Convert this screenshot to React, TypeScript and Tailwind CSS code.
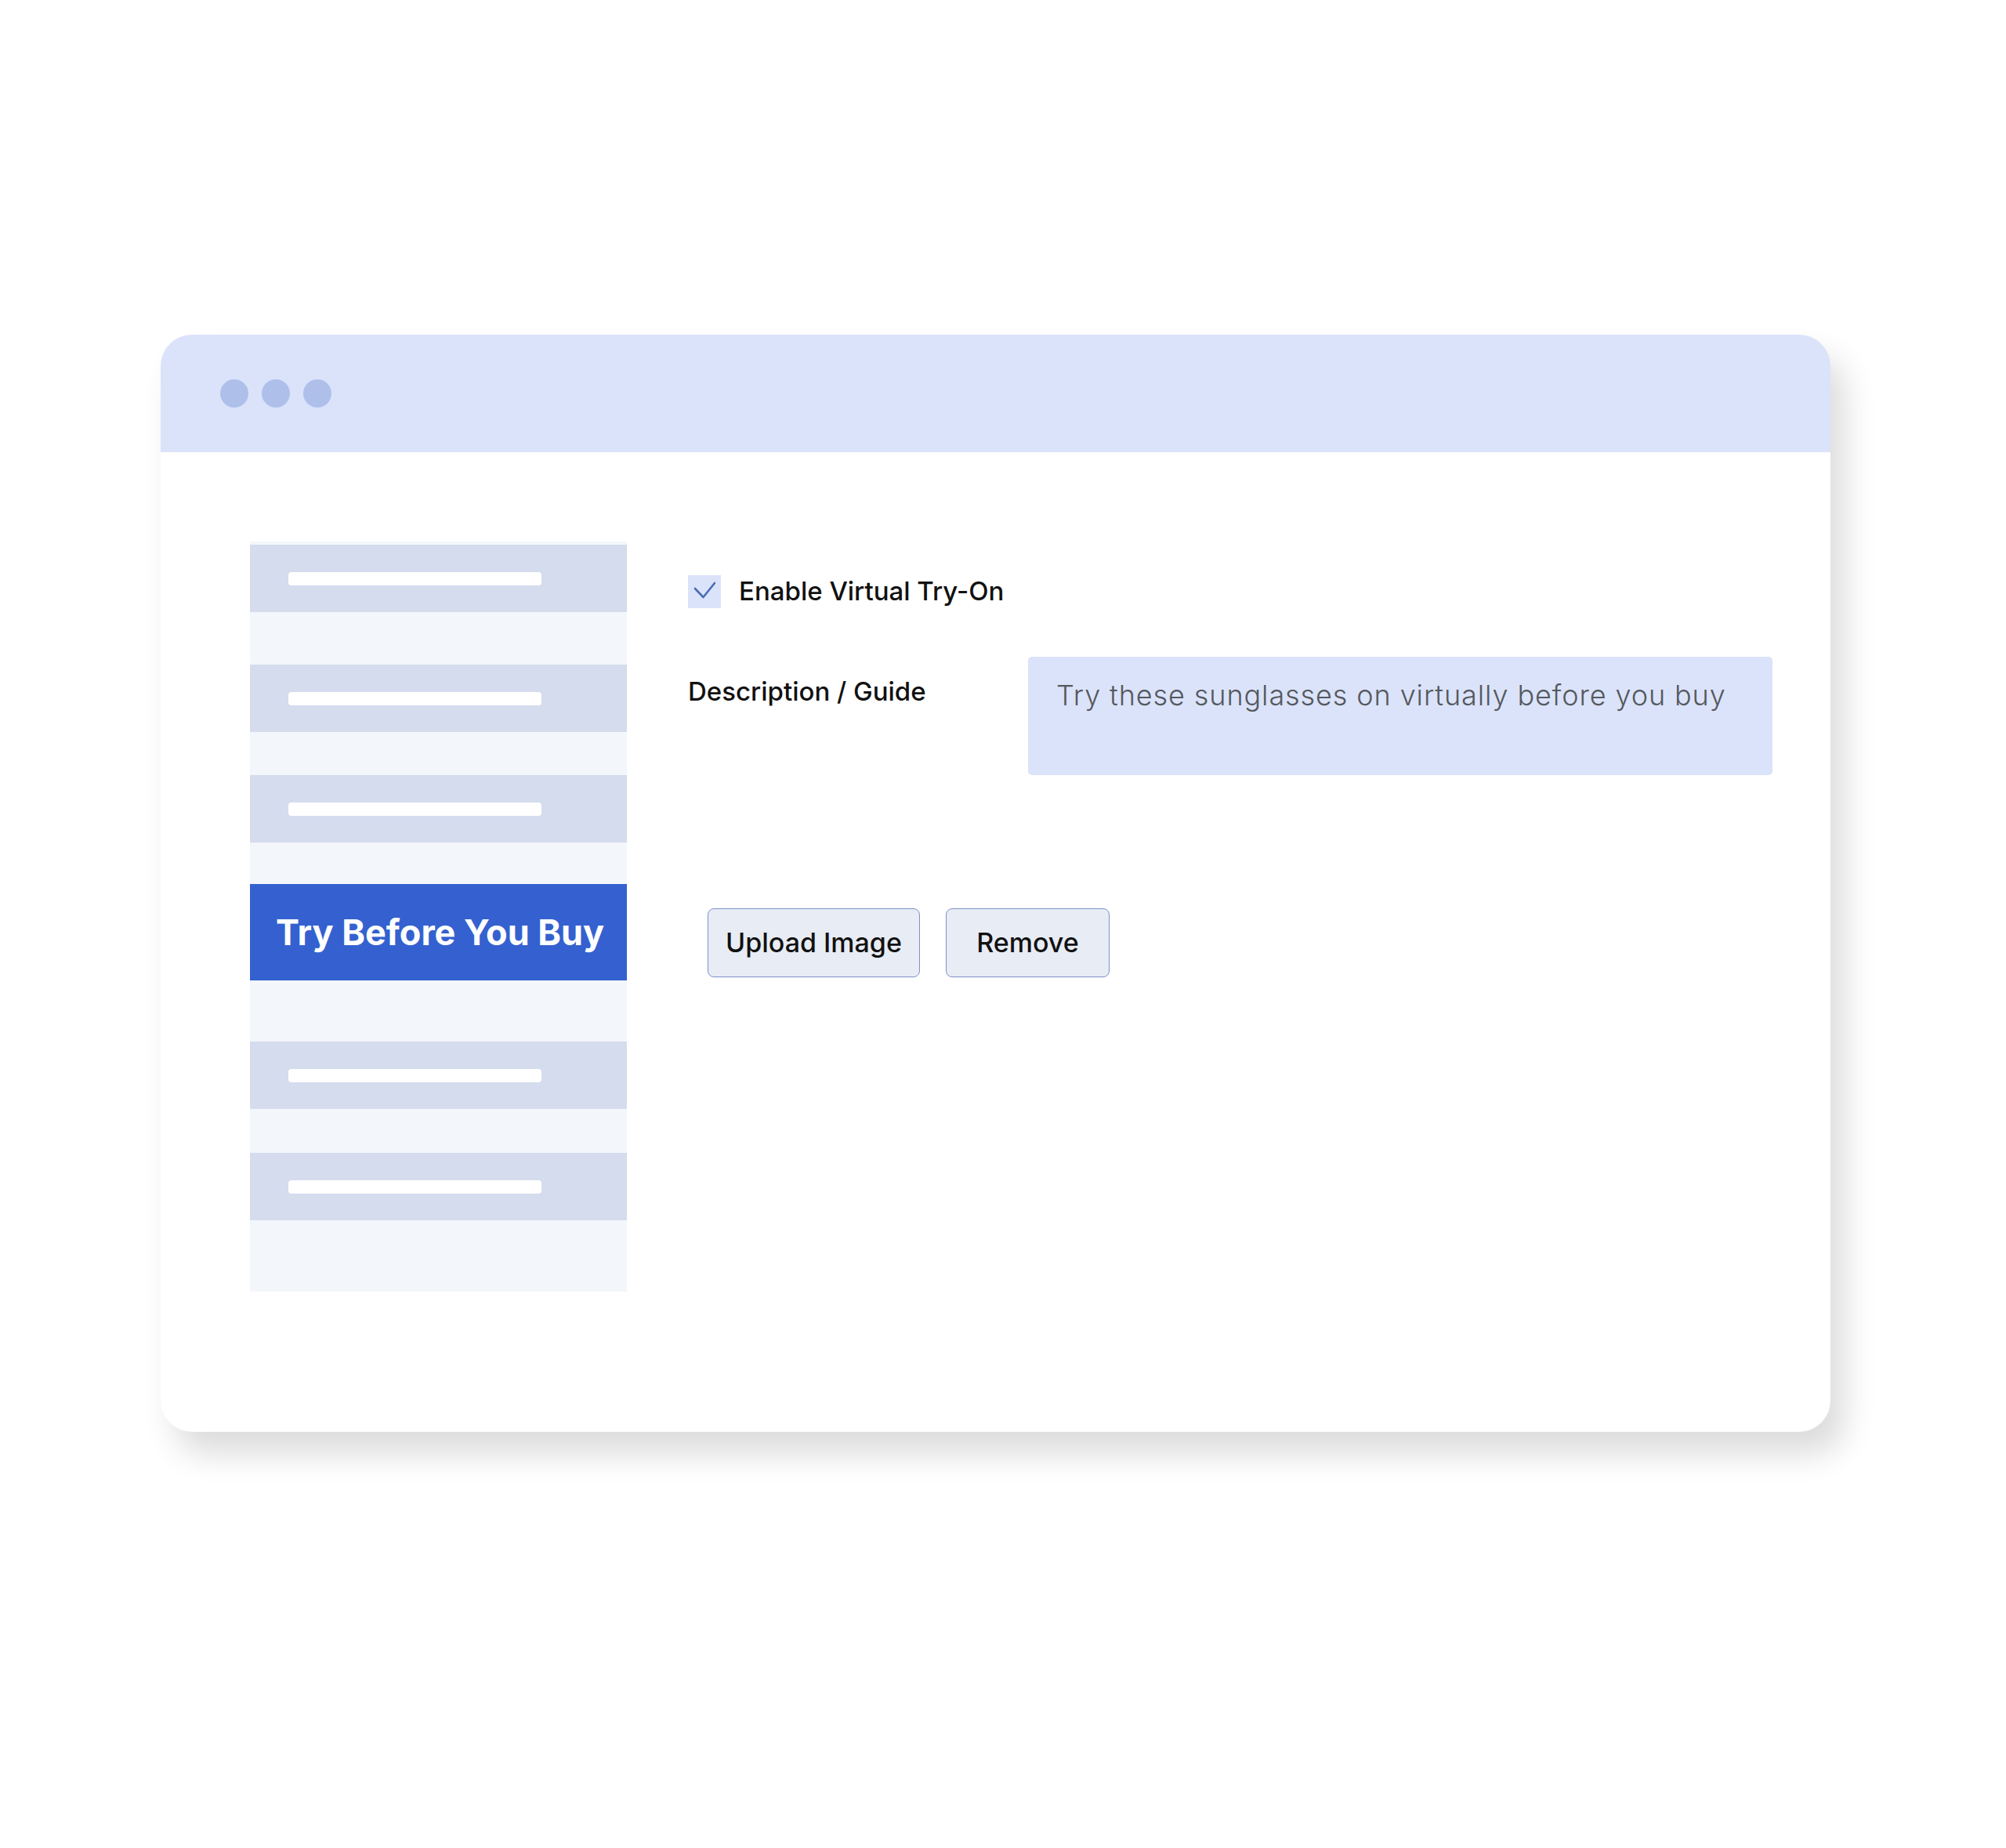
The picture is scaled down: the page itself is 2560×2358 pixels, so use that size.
const bodyFont = { fontFamily: "Inter, 'Noto Sans', sans-serif" };

const NavBlock = ({ className = "" }: { className?: string }) => (
  <div className={`flex h-[86px] items-center bg-[#d4dcee] ${className}`}>
    <div className="ml-[49px] h-[17px] w-[323px] rounded-[4px] bg-white" />
  </div>
);

const Sidebar = () => (
  <div className="flex h-[957px] w-[481px] flex-col bg-[#f3f6fa] pt-[4px]">
    <NavBlock />
    <NavBlock className="mt-[67px]" />
    <NavBlock className="mt-[55px]" />
    <div className="mt-[53px] flex h-[123px] items-center bg-[#3461cf] pl-[33px]">
      <span className="text-[45px] font-bold text-white">
        Try Before You Buy
      </span>
    </div>
    <NavBlock className="mt-[78px]" />
    <NavBlock className="mt-[56px]" />
  </div>
);

const SettingsPanel = () => (
  <div className="ml-[78px] flex flex-1 flex-col pt-[39px] pr-[74px]">
    <label className="flex items-center gap-[23px]">
      <span className="flex h-[42px] w-[42px] items-center justify-center bg-[#dbe3fa]">
        <svg width="42" height="42" viewBox="0 0 42 42" fill="none">
          <path
            d="M9 17 L19.5 28 L34 10"
            stroke="#4a6db3"
            strokeWidth="2.6"
            strokeLinecap="round"
            strokeLinejoin="round"
          />
        </svg>
      </span>
      <span className="text-[33px] font-medium text-[#111]">
        Enable Virtual Try-On
      </span>
    </label>

    <div className="mt-[58px] flex items-start">
      <span className="mt-[20px] w-[434px] shrink-0 text-[33px] font-medium text-[#111]">
        Description / Guide
      </span>
      <div className="h-[151px] flex-1 rounded-[5px] bg-[#dbe3fa] pt-[22px] pl-[36px]">
        <span className="text-[36px] font-light tracking-[0.9px] text-[#55595e]">
          Try these sunglasses on virtually before you buy
        </span>
      </div>
    </div>

    <div className="mt-[170px] ml-[25px] flex gap-[33px]">
      <button className="h-[88px] w-[271px] rounded-[8px] border-[1.5px] border-[#7d91c6] bg-[#e8ecf5] text-[34px] font-medium text-[#111]">
        Upload Image
      </button>
      <button className="h-[88px] w-[209px] rounded-[8px] border-[1.5px] border-[#7d91c6] bg-[#e8ecf5] text-[34px] font-medium text-[#111]">
        Remove
      </button>
    </div>
  </div>
);

export default function App() {
  return (
    <div
      className="min-h-[2358px] w-[2560px] bg-white pt-[427px] pl-[205px]"
      style={bodyFont}
    >
      <div className="flex h-[1400px] w-[2131px] flex-col overflow-hidden rounded-[40px] bg-white shadow-[18px_28px_40px_rgba(0,0,0,0.14)]">
        {/* title bar */}
        <div className="flex h-[150px] items-center gap-[17px] bg-[#dbe3fa] pl-[76px]">
          <span className="h-[36px] w-[36px] rounded-full bg-[#aec0ea]" />
          <span className="h-[36px] w-[36px] rounded-full bg-[#aec0ea]" />
          <span className="h-[36px] w-[36px] rounded-full bg-[#aec0ea]" />
        </div>

        <div className="flex pt-[114px] pl-[114px]">
          <Sidebar />
          <SettingsPanel />
        </div>
      </div>
    </div>
  );
}
